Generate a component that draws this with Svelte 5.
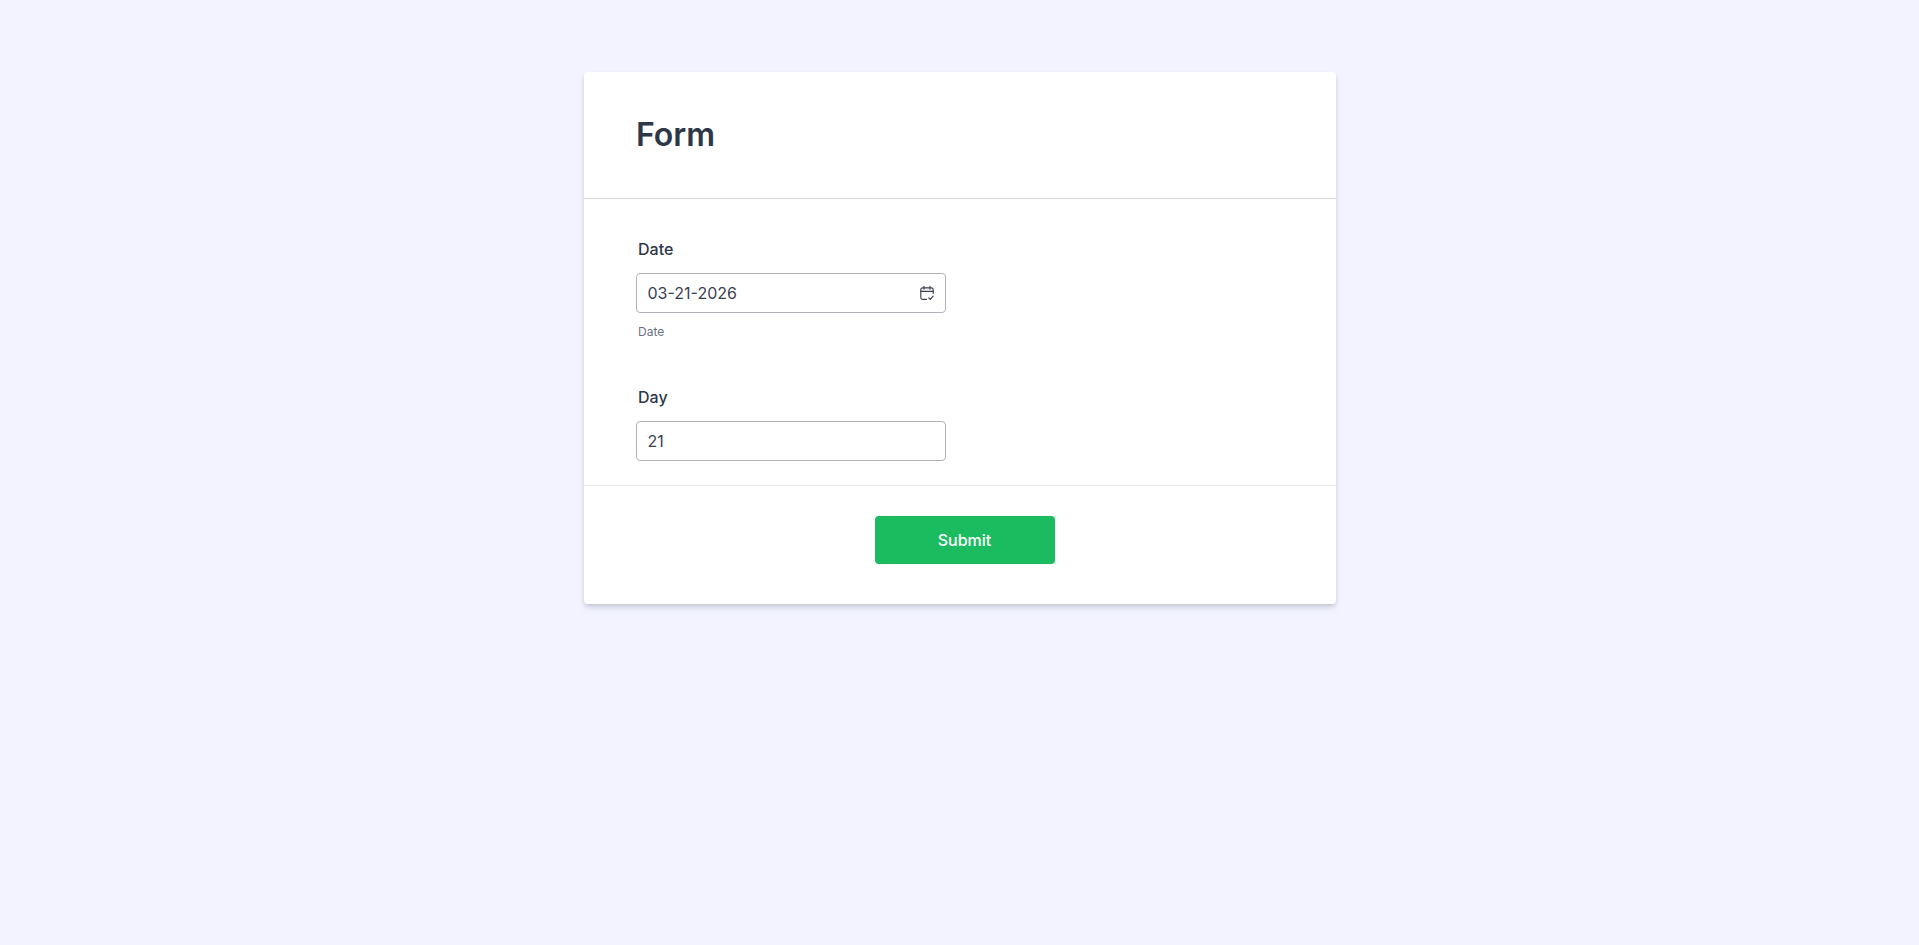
<script>
  let date = $state('03-21-2026');
  let day = $state('21');
</script>

<main class="page">
  <form class="card" onsubmit={(e) => e.preventDefault()}>
    <header class="head"><h1>Form</h1></header>
    <div class="body">
      <div class="field date-field">
        <label for="date">Date</label>
        <div class="control">
          <input id="date" type="text" bind:value={date} />
          <svg class="cal" viewBox="0 0 16 16" width="16" height="16" fill="none" stroke="currentColor" stroke-width="1.15" stroke-linecap="round" stroke-linejoin="round" aria-hidden="true">
            <path d="M7.5 14.4H3.6A1.8 1.8 0 0 1 1.8 12.6V4.6A1.8 1.8 0 0 1 3.6 2.8h8.8A1.8 1.8 0 0 1 14.2 4.6V8.5" />
            <path d="M1.8 6.4h12.4M5 1.2v3M11 1.2v3" />
            <path d="M9.8 13l1.5 1.4 2.9-3.2" />
          </svg>
        </div>
        <p class="help">Date</p>
      </div>
      <div class="field">
        <label for="day">Day</label>
        <div class="control">
          <input id="day" type="text" bind:value={day} />
        </div>
      </div>
    </div>
    <footer class="foot">
      <button type="submit">Submit</button>
    </footer>
  </form>
</main>

<style>
  :global(body) {
    margin: 0;
    background: #f2f3ff;
    font-family: Inter, "Liberation Sans", sans-serif;
    color: #2d3748;
  }
  .page {
    min-height: 945px;
    box-sizing: border-box;
    padding: 72px 0 0 0;
    display: flex;
    justify-content: center;
  }
  .card {
    width: 752px;
    height: 532px;
    background: #fff;
    border-radius: 4px;
    box-shadow: 0 4px 6px -1px rgba(60, 64, 90, 0.2), 0 2px 4px -1px rgba(60, 64, 90, 0.12);
    display: flex;
    flex-direction: column;
  }
  .head {
    height: 127px;
    box-sizing: border-box;
    border-bottom: 1px solid #d5d7dc;
    padding: 43px 52px 0 52.5px;
    flex: none;
  }
  h1 {
    margin: 0;
    font-size: 32px;
    line-height: 40px;
    font-weight: 600;
    color: #2d3748;
  }
  .body {
    flex: none;
    height: 287px;
    box-sizing: border-box;
    padding: 38px 52px 0;
    border-bottom: 1px solid #e5e7eb;
  }
  .field label {
    display: block;
    font-size: 16px;
    line-height: 24px;
    font-weight: 450;
    margin: 0 0 12px 2.5px;
    color: #2d3748;
  }
  .date-field { margin-bottom: 45px; }
  .control {
    position: relative;
    width: 310px;
  }
  input {
    display: block;
    width: 100%;
    height: 40px;
    box-sizing: border-box;
    border: 1px solid #b0b3b8;
    border-radius: 4px;
    padding: 0 11px;
    font: 400 16px Inter, "Liberation Sans", sans-serif;
    color: #3a4050;
    background: #fff;
    outline: none;
  }
  .cal {
    position: absolute;
    right: 11px;
    top: 12px;
    color: #3a4050;
  }
  .help {
    margin: 11px 0 0 2.5px;
    font-size: 12px;
    line-height: 16px;
    color: #6b7080;
  }
  .foot {
    flex: 1;
    display: flex;
    justify-content: center;
    padding: 30px 0 0 10px;
  }
  button {
    width: 180px;
    height: 48px;
    border: 0;
    border-radius: 4px;
    background: #1abc5f;
    color: #fff;
    font: 500 16px Inter, "Liberation Sans", sans-serif;
    cursor: pointer;
  }
</style>
